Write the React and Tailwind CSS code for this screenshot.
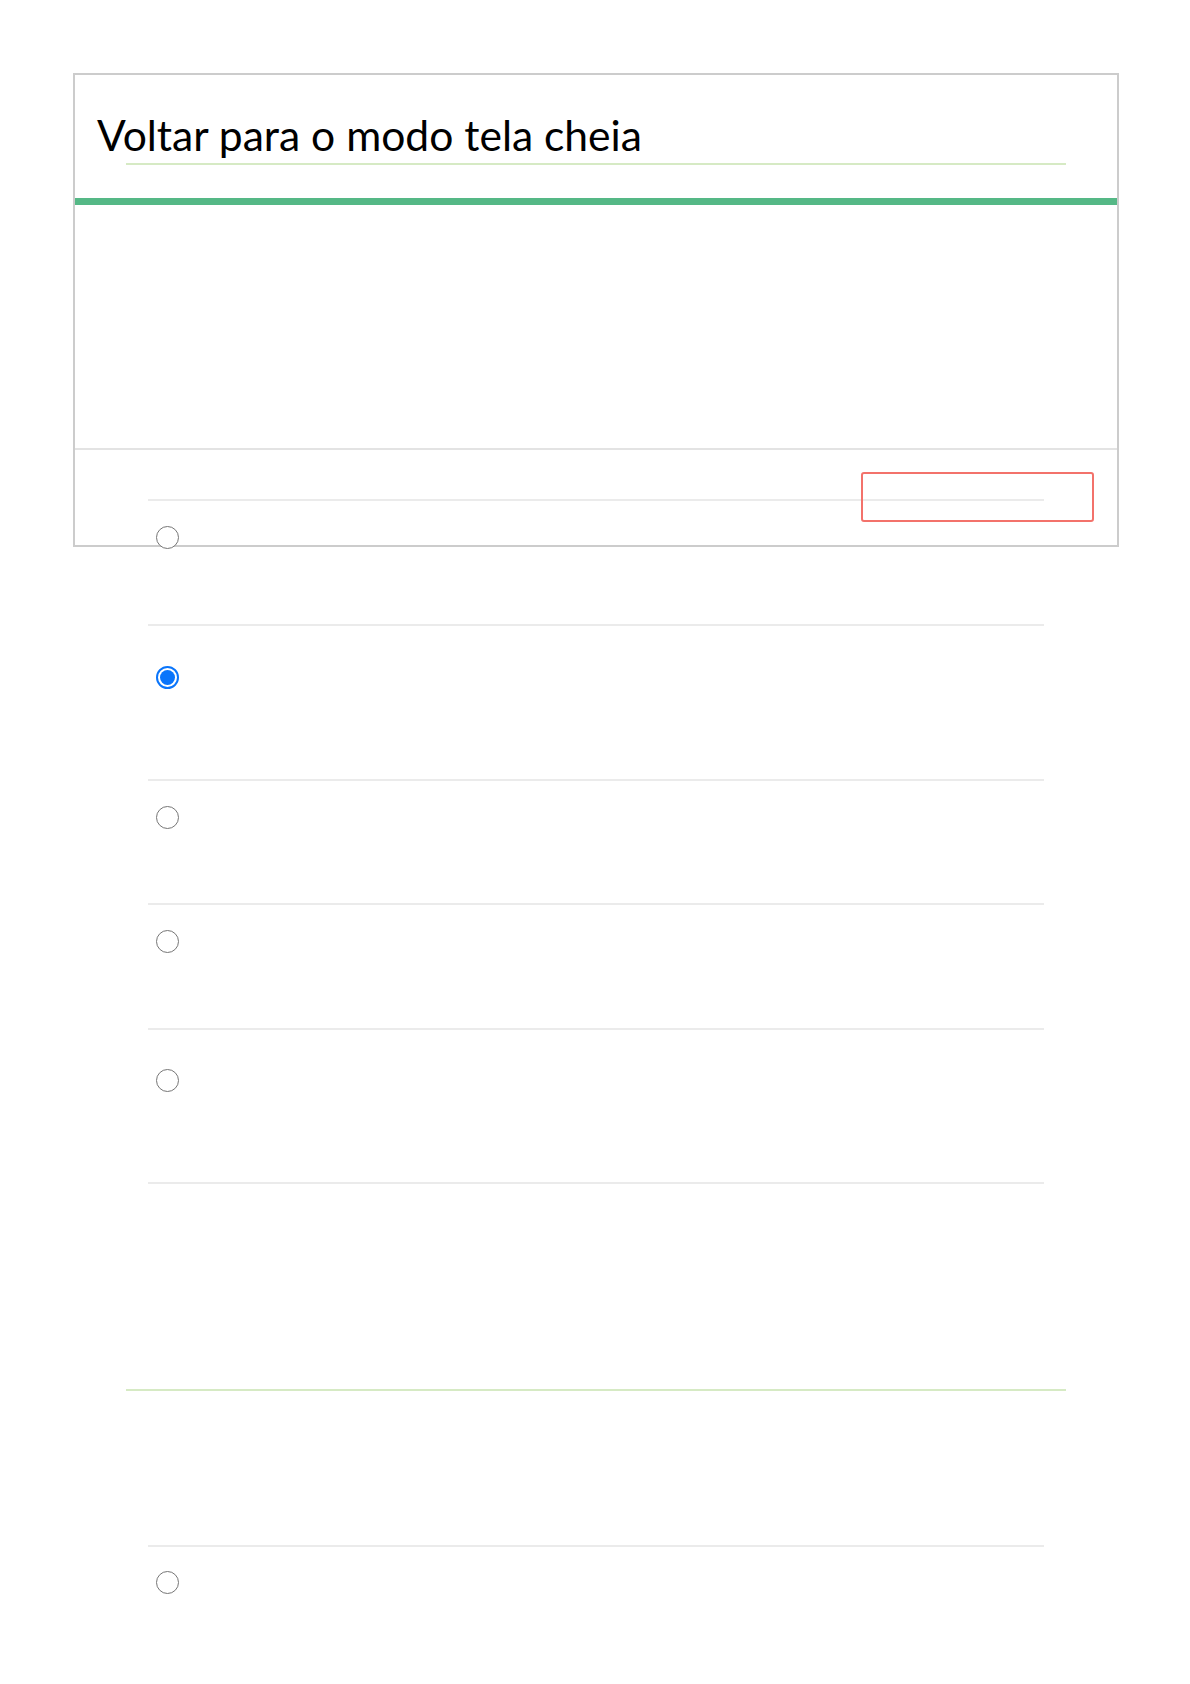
import React from "react";

const rows = [
    { cls: "h-[125px] pt-[25px]", checked: false },
    { cls: "h-[155px] pt-[40px]", checked: true },
    { cls: "h-[124px] pt-[25px]", checked: false },
    { cls: "h-[125px] pt-[25px]", checked: false },
    { cls: "h-[154px] pt-[39px]", checked: false },
];

function Radio({ checked }) {
    if (checked) {
        return (
            <span role="radio" aria-checked="true" className="flex items-center justify-center w-[23px] h-[23px] rounded-full border-2 border-[#0a75fb] bg-white">
                <span className="block w-[15px] h-[15px] rounded-full bg-[#0a75fb]" />
            </span>
        );
    }
    return (
        <span role="radio" aria-checked="false" className="block w-[23px] h-[23px] rounded-full border-[1.5px] border-[#767676] bg-white" />
    );
}

export default function App() {
    return (
        <div className="min-h-[1684px] bg-white pt-[73px] pl-[73px] font-['Lato','Noto_Sans',sans-serif]">
            {/* Card */}
            <div className="relative w-[1046px] h-[474px] border-2 border-[#cccccc]">
                <h1 className="pl-[22px] pt-[35px] text-[42.6px] leading-[50px] font-normal text-black">
                    Voltar para o modo tela cheia
                </h1>
                <div className="ml-[51px] mt-[3px] w-[940px] h-[2px] bg-[#d6eac4]" />
                <div className="mt-[33px] h-[7px] bg-[#55b886]" />

                <div className="mt-[243px] h-[2px] bg-[#e3e3e3]" />

                {/* red outlined field */}
                <div className="absolute left-[786px] top-[397px] w-[233px] h-[50px] border-2 border-[#f3726b] rounded-[3px]" />

                {/* Options */}
                <div className="ml-[73px] mt-[49px] w-[896px] border-b-2 border-[#ebebeb]">
                    {rows.map((row, i) => (
                        <div key={i} className={`${row.cls} pl-[8px] border-t-2 border-[#ebebeb]`}>
                            <Radio checked={row.checked} />
                        </div>
                    ))}
                </div>

                <div className="ml-[51px] mt-[205px] w-[940px] h-[2px] bg-[#d6eac4]" />

                <div className="ml-[73px] mt-[154px] w-[896px] pt-[24px] pl-[8px] border-t-2 border-[#ebebeb]">
                    <Radio checked={false} />
                </div>
            </div>
        </div>
    );
}
